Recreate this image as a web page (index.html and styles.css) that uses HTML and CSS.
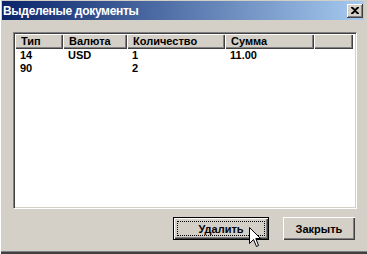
FILE: index.html
```html
<!DOCTYPE html>
<html>
<head>
<meta charset="utf-8">
<link rel="stylesheet" href="styles.css">
</head>
<body>
<div class="window">
  <div class="titlebar">
    <span class="title">Выделеные документы</span>
    <button class="close" aria-label="close">
      <svg width="8" height="7" viewBox="0 0 8 7"><path d="M0 0h2l2 2 2-2h2v1L5 3.5 8 6v1H6L4 5 2 7H0V6l3-2.5L0 1z" fill="#000"/></svg>
    </button>
  </div>
  <div class="body">
    <div class="list">
      <div class="header">
        <div class="hcell c1">Тип</div>
        <div class="hcell c2">Валюта</div>
        <div class="hcell c3">Количество</div>
        <div class="hcell c4">Сумма</div>
        <div class="hcell c5"></div>
      </div>
      <div class="row">
        <div class="cell c1">14</div>
        <div class="cell c2">USD</div>
        <div class="cell c3">1</div>
        <div class="cell c4">11.00</div>
      </div>
      <div class="row">
        <div class="cell c1">90</div>
        <div class="cell c2"></div>
        <div class="cell c3">2</div>
        <div class="cell c4"></div>
      </div>
    </div>
    <div class="buttons">
      <button class="btn default"><span class="focus">Удалить</span></button>
      <button class="btn">Закрыть</button>
    </div>
  </div>
  <svg class="cursor" width="13" height="21" viewBox="0 0 13 21"><path d="M0.5 0.5V16.5L4.5 12.5L7.5 19.5L9.5 18.5L6.8 11.5H11.5Z" fill="#fff" stroke="#000" stroke-width="1" stroke-linejoin="miter"/></svg>
</div>
</body>
</html>
```

FILE: styles.css
```css
html, body {
  margin: 0;
  padding: 0;
  background: #D4D0C8;
}
body {
  font-family: "Liberation Sans", Arial, sans-serif;
  font-size: 11px;
  font-weight: bold;
  color: #000;
}
.window {
  position: relative;
  width: 367px;
  height: 254px;
  box-sizing: border-box;
  background: #D4D0C8;
  padding: 1px 3px 0 2px;
  box-shadow: inset 1px 0 #fff, inset 0 -2px #404040, inset 0 -3px #808080;
  overflow: hidden;
}
.titlebar {
  height: 19px;
  display: flex;
  align-items: center;
  justify-content: space-between;
  padding: 0 1px 0 1px;
  background: linear-gradient(to right, #0A246A, #A6CAF0);
  color: #fff;
}
.title {
  font-size: 12px;
  font-weight: bold;
  letter-spacing: -0.3px;
}
.close {
  width: 16px;
  height: 14px;
  padding: 0;
  margin: 0;
  border: none;
  background: #D4D0C8;
  box-shadow: inset -1px -1px #404040, inset 1px 1px #fff, inset -2px -2px #808080;
  display: flex;
  align-items: center;
  justify-content: center;
}
.body {
  padding: 12px 5px 0 11px;
}
.list {
  width: 344px;
  height: 177px;
  box-sizing: border-box;
  background: #fff;
  border-top: 1px solid #808080;
  border-left: 1px solid #808080;
  border-right: 1px solid #fff;
  border-bottom: 1px solid #fff;
  box-shadow: inset 1px 1px #404040, inset -1px -1px #D4D0C8;
  padding: 1px 3px 0 1px;
}
.header {
  display: flex;
  height: 15px;
}
.hcell {
  box-sizing: border-box;
  height: 15px;
  line-height: 14px;
  background: #D4D0C8;
  box-shadow: inset 1px 1px #fff, inset -1px -1px #404040, inset -2px -2px #808080;
  padding-left: 6px;
}
.c1 { width: 48px; }
.c2 { width: 64px; }
.c3 { width: 98px; }
.c4 { width: 89px; }
.c5 { width: 39px; }
.row {
  display: flex;
  height: 13px;
  line-height: 13px;
}
.cell {
  box-sizing: border-box;
  padding-left: 5px;
}
.buttons {
  display: flex;
  justify-content: flex-end;
  gap: 14px;
  padding: 8px 4px 0 0;
}
.btn {
  font: inherit;
  height: 23px;
  box-sizing: border-box;
  margin: 0;
  padding: 0;
  border: none;
  background: #D4D0C8;
  box-shadow: inset 1px 1px #fff, inset -1px -1px #404040, inset -2px -2px #808080;
  width: 72px;
  color: #000;
}
.btn.default {
  width: 96px;
  border: 1px solid #000;
  padding: 3px;
}
.focus {
  display: flex;
  align-items: center;
  justify-content: center;
  height: 100%;
  box-sizing: border-box;
  border: 1px dotted #000;
}
.cursor {
  position: absolute;
  left: 249px;
  top: 227px;
}
```
